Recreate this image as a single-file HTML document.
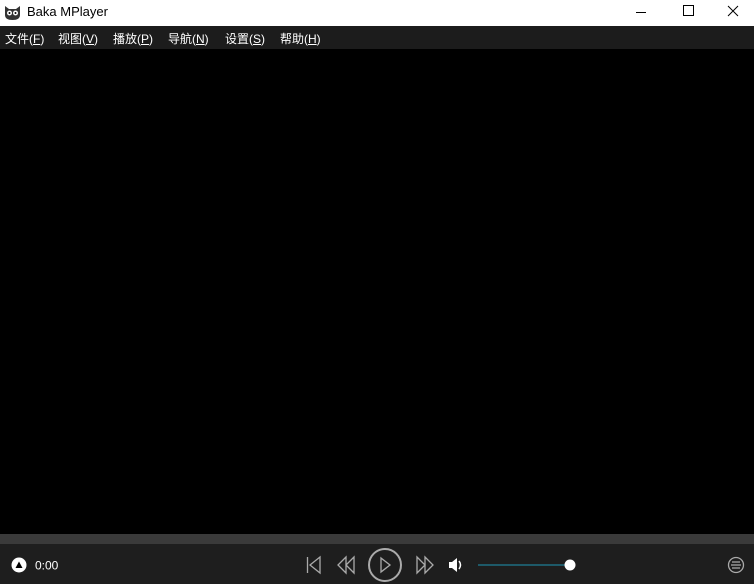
<!DOCTYPE html>
<html><head><meta charset="utf-8"><style>
*{margin:0;padding:0;box-sizing:border-box}
body{width:754px;height:584px;background:#000;position:relative;overflow:hidden;font-family:"Liberation Sans","Noto Sans CJK SC",sans-serif}
.title{position:absolute;left:0;top:0;width:754px;height:26px;background:#fff;color:#000;font-size:13px}
.menu{position:absolute;left:0;top:26px;width:754px;height:23px;background:#1c1c1c;color:#fff;font-size:12px}
.menu span{position:absolute;top:4px}
.seek{position:absolute;left:0;top:534px;width:754px;height:10px;background:#3a3a3a}
.ctrl{position:absolute;left:0;top:544px;width:754px;height:40px;background:#1e1e1e}
</style></head><body>
<div class="title">
<svg style="position:absolute;left:4px;top:4px" width="17" height="17" viewBox="0 0 17 17"><path d="M1 2 L5 5 L12 5 L16 2 L16 11 Q16 16 8.5 16 Q1 16 1 11Z" fill="#333"/><circle cx="5.5" cy="9" r="2.5" fill="#fff"/><circle cx="11.5" cy="9" r="2.5" fill="#fff"/><circle cx="5.5" cy="9" r="1" fill="#000"/><circle cx="11.5" cy="9" r="1" fill="#000"/></svg>
<span style="position:absolute;left:27px;top:4px">Baka MPlayer</span>
<svg style="position:absolute;left:632px;top:0" width="122" height="26"><line x1="4" y1="12.5" x2="14" y2="12.5" stroke="#000"/><rect x="51.5" y="5.5" width="10" height="10" fill="none" stroke="#000"/><path d="M96 6 L106 16 M106 6 L96 16" stroke="#000"/></svg>
</div>
<div class="menu">
<span style="left:5px">文件(<u>F</u>)</span>
<span style="left:58px">视图(<u>V</u>)</span>
<span style="left:113px">播放(<u>P</u>)</span>
<span style="left:168px">导航(<u>N</u>)</span>
<span style="left:225px">设置(<u>S</u>)</span>
<span style="left:280px">帮助(<u>H</u>)</span>
</div>
<div class="seek"></div>
<div class="ctrl">
<svg width="754" height="40" style="position:absolute;left:0;top:0">
<circle cx="19" cy="21" r="7.5" fill="#fff"/><path d="M15.5 24 L19 17.5 L22.5 24Z" fill="#000"/>
<text x="35" y="25.5" fill="#fff" font-size="12" font-family="Liberation Sans">0:00</text>
<g stroke="#aaa" stroke-width="1.3" fill="none">
<line x1="307.5" y1="13" x2="307.5" y2="29"/><path d="M320 13 L310 21 L320 29Z"/>
<path d="M346 13 L338 21 L346 29Z M354 13 L346 21 L354 29Z"/>
<circle cx="385" cy="21" r="16" stroke-width="2"/><path d="M381 14 L390 21 L381 28Z"/>
<path d="M417 13 L425 21 L417 29Z M425 13 L433 21 L425 29Z"/>
<circle cx="736" cy="21" r="7.5"/><path d="M732 18h8M731 21h10M732 24h8"/>
</g>
<path d="M449 18h3l5-4v14l-5-4h-3Z" fill="#fff"/><path d="M459 17 Q462 21 459 25" stroke="#fff" stroke-width="1.5" fill="none"/>
<line x1="478" y1="21" x2="568" y2="21" stroke="#1f7f96" stroke-width="1.2"/>
<circle cx="570" cy="21" r="5.5" fill="#fff"/>
</svg>
</div>
</body></html>
